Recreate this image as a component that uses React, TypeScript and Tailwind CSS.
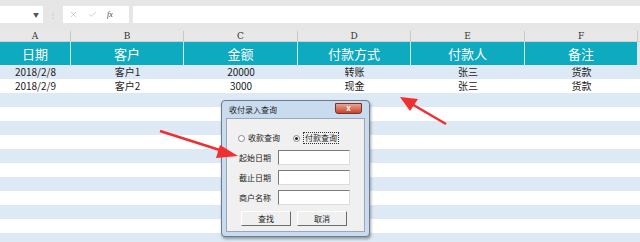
import { X, Check } from 'lucide-react';

const cols = [
  { letter: 'A', title: '日期', w: 'w-[71px]' },
  { letter: 'B', title: '客户', w: 'w-[113px]' },
  { letter: 'C', title: '金额', w: 'w-[114px]' },
  { letter: 'D', title: '付款方式', w: 'w-[113px]' },
  { letter: 'E', title: '付款人', w: 'w-[114px]' },
  { letter: 'F', title: '备注', w: 'w-[113px]' },
];

const rows = [
  ['2018/2/8', '客户1', '20000', '转账', '张三', '货款'],
  ['2018/2/9', '客户2', '3000', '现金', '张三', '货款'],
];

const font = "font-['Noto_Sans_CJK_SC',sans-serif]";

function Arrows() {
  return (
    <svg className="absolute left-0 top-0 pointer-events-none" width="640" height="242">
      <line x1="160" y1="131" x2="226" y2="152" stroke="#f03030" strokeWidth="2.5" />
      <polygon points="238,156 220,145 216,158" fill="#f03030" />
      <line x1="446" y1="124" x2="410" y2="103" stroke="#f03030" strokeWidth="2.5" />
      <polygon points="400,97 418,99 410,111" fill="#f03030" />
    </svg>
  );
}

function Dialog() {
  return (
    <div className="absolute left-[221px] top-[100px] w-[149px] h-[137px] rounded-[4px] border border-[#6b7a8c] bg-[#c9dcef] shadow-[1px_2px_3px_rgba(0,0,0,0.35)] flex flex-col px-[4px] pb-[4px]">
      <div className="h-[17px] flex items-center justify-between pl-[3px]">
        <span className="text-[8px] leading-none text-[#1a1a1a]">收付录入查询</span>
        <div className="w-[27px] h-[11px] -mt-[3px] mr-[3px] rounded-b-[3px] bg-gradient-to-b from-[#e8a392] to-[#c2412d] border border-[#7d3226] flex items-center justify-center">
          <span className="text-white text-[8px] font-bold leading-none">x</span>
        </div>
      </div>
      <div className="flex-1 bg-[#f0f0f0] border border-[#9aa8b8] flex flex-col px-[11px] pt-[13px] text-[8px] leading-none text-[#222]">
        <div className="flex items-center gap-[5px] h-[12px]">
          <span className="flex items-center gap-[3px]">
            <span className="w-[7px] h-[7px] rounded-full border border-[#888] bg-white" />
            收款查询
          </span>
          <span className="flex items-center gap-[3px] ml-[8px]">
            <span className="w-[7px] h-[7px] rounded-full border border-[#888] bg-white flex items-center justify-center">
              <span className="w-[3px] h-[3px] rounded-full bg-[#222]" />
            </span>
            <span className="border border-dotted border-[#333] px-[1px] py-[1px]">付款查询</span>
          </span>
        </div>
        <div className="flex flex-col gap-[5px] mt-[6px]">
          {['起始日期', '截止日期', '商户名称'].map((l) => (
            <div key={l} className="flex items-center gap-[4px] pl-[1px]">
              <span className="w-[35px]">{l}</span>
              <div className="w-[72px] h-[15px] bg-white border border-t-[#7a7a7a] border-l-[#7a7a7a] border-b-[#dcdcdc] border-r-[#dcdcdc]" />
            </div>
          ))}
        </div>
        <div className="flex gap-[6px] mt-[6px] pl-[3px]">
          {['查找', '取消'].map((b) => (
            <div key={b} className="w-[50px] h-[15px] bg-[#f0f0f0] border border-t-white border-l-white border-b-[#6d6d6d] border-r-[#6d6d6d] flex items-center justify-center">
              {b}
            </div>
          ))}
        </div>
      </div>
    </div>
  );
}

export default function App() {
  return (
    <div className={`relative w-[640px] h-[242px] overflow-hidden bg-white ${font}`}>
      <div className="h-[6px] bg-[#e6e6e6]" />
      <div className="h-[17px] bg-[#e6e6e6] flex gap-[4px] items-stretch">
        <div className="w-[43px] bg-white flex items-center justify-end pr-[4px]">
          <span className="text-[6px] leading-none text-[#555]">▼</span>
        </div>
        <div className="w-[12px] flex items-center justify-center text-[#bbb] text-[8px]">⋮</div>
        <div className="w-[66px] bg-white flex items-center gap-[10px] pl-[6px] text-[#aaa]">
          <X size={9} strokeWidth={1.5} />
          <Check size={9} strokeWidth={1.5} />
          <span className="text-[8px] italic text-[#444] font-['Liberation_Serif',serif]">fx</span>
        </div>
        <div className="flex-1 bg-white" />
      </div>
      <div className="h-[8px] bg-[#e6e6e6]" />
      <div className="flex h-[11px] bg-[#e8e8e8] border-b border-[#d0d0d0]">
        {cols.map((c) => (
          <div key={c.letter} className={`${c.w} border-r border-[#c8c8c8] flex items-center justify-center text-[9px] leading-none text-[#333] font-['DejaVu_Serif',serif]`}>
            {c.letter}
          </div>
        ))}
        <div className="flex-1" />
      </div>
      <div className="flex h-[23px] bg-[#0eaabf]">
        {cols.map((c) => (
          <div key={c.letter} className={`${c.w} border-r border-[#c9eef3] flex items-center justify-center text-[13px] leading-none text-white`}>
            {c.title}
          </div>
        ))}
        <div className="flex-1 bg-[#e6e6e6]" />
      </div>
      {Array.from({ length: 13 }).map((_, i) => (
        <div key={i} className={`flex h-[14px] ${i % 2 === 0 ? 'bg-[#dde9f5]' : 'bg-white'}`}>
          {cols.map((c, j) => (
            <div key={c.letter} className={`${c.w} flex items-center justify-center text-[10px] leading-none text-[#222]`}>
              {rows[i]?.[j] ?? ''}
            </div>
          ))}
        </div>
      ))}
      <Dialog />
      <Arrows />
    </div>
  );
}
